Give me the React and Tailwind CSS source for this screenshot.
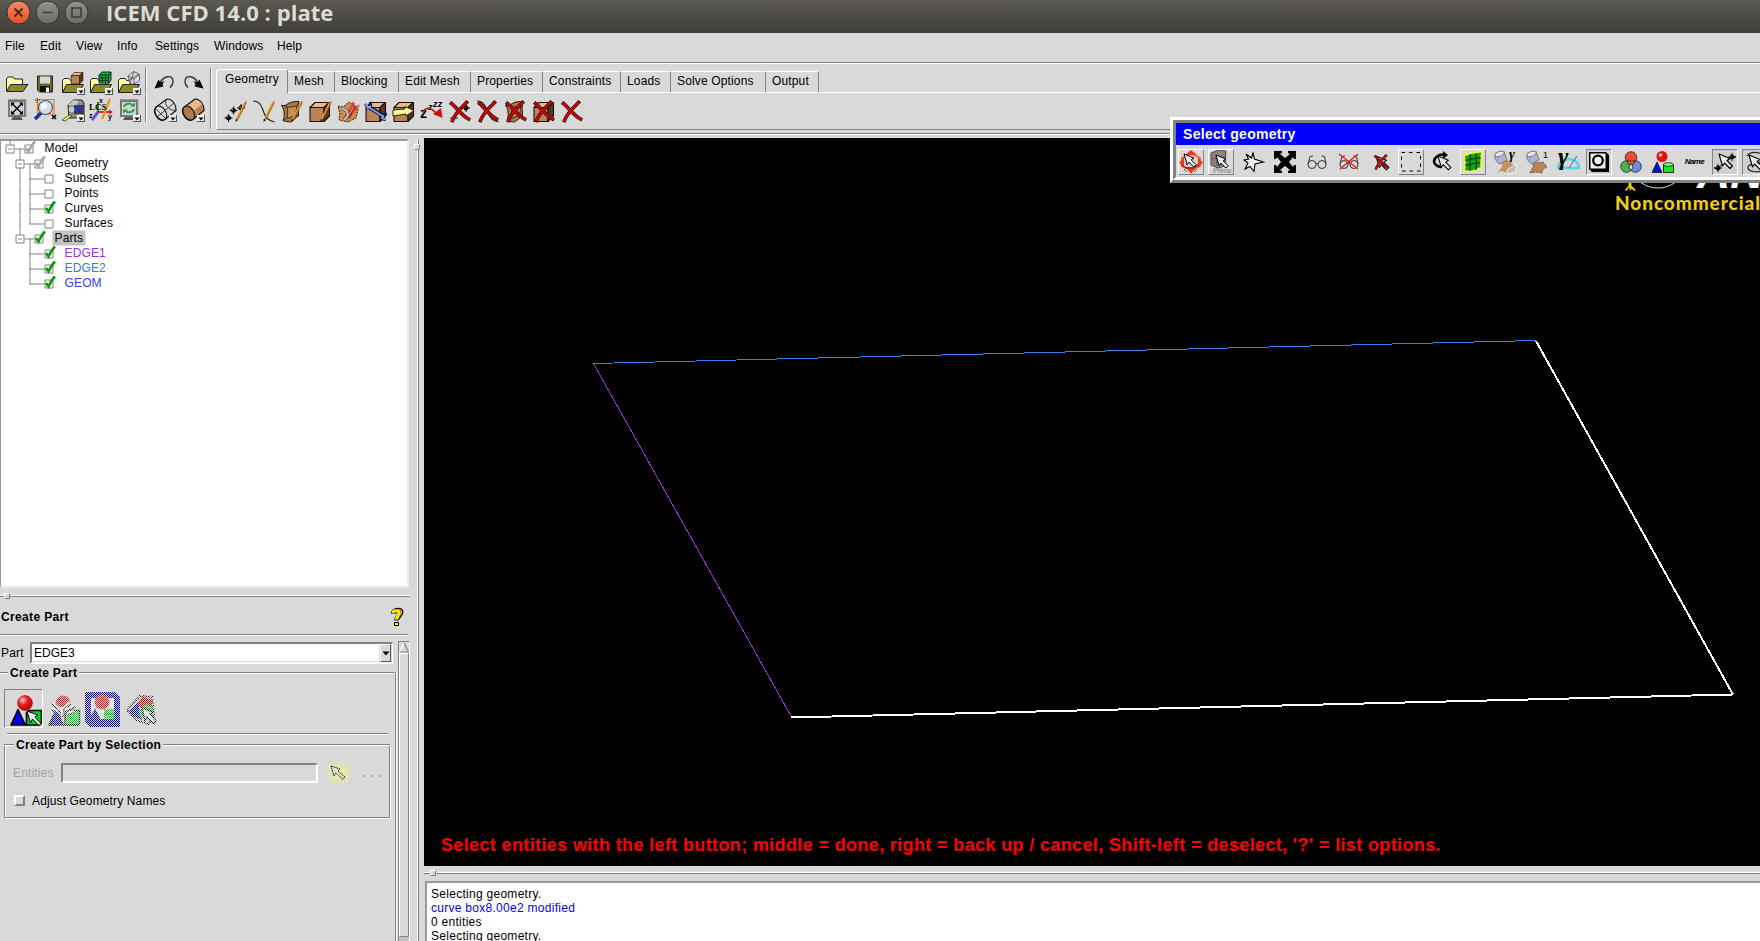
import React from "react";

const Svg = ({ children, w = 24, h = 24, vb, className = "" }) => (
  <svg width={w} height={h} viewBox={vb || `0 0 ${w} ${h}`} fill="none" className={`block shrink-0 ${className}`}>
    {children}
  </svg>
);

/* ---------- shared drawing parts ---------- */
const Drop = () => (
  <g>
    <path d="M16 17h8v7h-8z" fill="#e8e8e8" />
    <path d="M16 23.5h8M23.5 17v7" stroke="#555" />
    <path d="M16.5 23V17.500H23" stroke="#fff" />
    <path d="M17.500 19.500h5l-2.500 3z" fill="#000" />
  </g>
);
const Folder = () => (
  <g stroke="#222" strokeWidth="1">
    <path d="M1.5 21V9.500l1.500-2h5l1.500 2h7V21z" fill="#ffffa8" />
    <path d="M1.500 21.500l4-8H22.500l-4.500 8z" fill="#8c8a22" />
  </g>
);
const Pencil = () => (
  <g>
    <path d="M12.500 20L21 2.500" stroke="#e8951c" strokeWidth="2" />
    <path d="M13.600 20L22.400 2.500" stroke="#7a4b10" strokeWidth=".8" />
    <path d="M11.500 22l.3-3 2 1z" fill="#000" />
    <path d="M20.300 3.500l1.200-2.500 1.200.6-1.200 2.500z" fill="#e06060" />
  </g>
);
const Box = () => (
  <g stroke="#1a1008" strokeWidth="1.100" strokeLinejoin="round">
    <path d="M2 7.500h14v14H2z" fill="#b98553" />
    <path d="M2 7.500l5-5h14.500l-5.500 5z" fill="#e9b98b" />
    <path d="M16 7.500l5.500-5V16L16 21.500z" fill="#5a3a1e" />
  </g>
);
const Surf = () => (
  <g stroke="#2a1a0c" strokeLinejoin="round">
    <path d="M1.500 5c2 1.500 4 .5 6-1 3-2.500 8-2.500 11.500-2.500-1.500 5-.5 9-.5 14-3 3-5 4.500-8 6.500-2.500-.5-4 0-7.500-1.500 1.500-3 2-10-1.500-15.500z" fill="#a87545" />
    <path d="M7 7c3 1 6-1 10-1-1 4-1 7-1 10-3 0-6 2-9 2 1-4 1-8 0-11z" fill="#c4925f" strokeWidth=".8" />
    <path d="M7 7L4 5M17 6l2-3M16 16l3 0M7 18l-3 2" strokeWidth=".7" />
  </g>
);
const Cross = () => (
  <g strokeLinecap="square">
    <path d="M3.500 3.500C8 7 13 15 20.500 19M18.500 2.500C14 7 7 13 4.500 20.500" stroke="#111" strokeWidth="3.600" />
    <path d="M3.500 3.500C8 7 13 15 20.500 19M18.500 2.500C14 7 7 13 4.500 20.500" stroke="#c40808" strokeWidth="2.600" />
  </g>
);
const Dot = ({ x, y }) => (
  <g>
    <path d={`M${x - 4} ${y}h8M${x} ${y - 4}v8`} stroke="#000" />
    <circle cx={x} cy={y} r="2.400" fill="#000" />
    <circle cx={x - .8} cy={y - .8} r=".7" fill="#999" />
  </g>
);
const Cylinder = ({ solid }) => (
  <g stroke="#111" strokeWidth="1.100" strokeLinejoin="round">
    <path d="M2.500 9.500L14 1c5-.5 9.500 6 9 11.500L12 21.500C6 25-1 15 2.500 9.500z" fill={solid ? "#b98553" : "none"} />
    {solid && <path d="M6 8L14.500 1.800c3 .2 5 2 6.500 4.500L12.500 13C11 10 9 8.500 6 8z" fill="#e9b98b" stroke="none" />}
    <ellipse cx="7.800" cy="15" rx="5" ry="7.600" transform="rotate(-33 7.800 15)" fill={solid ? "#b07a48" : "none"} />
    {!solid && <path d="M14 1c-4 4 1 12 9 11.500M4 19L21 5M3 11l9 9" strokeWidth=".8" />}
  </g>
);
const Arrow = ({ x = 0, y = 0, s = 1 }) => (
  <path
    transform={`translate(${x} ${y}) scale(${s})`}
    d="M0 0l11 4.500-3 2 5.500 5.500-2.500 2.500L5.500 9 3.500 12z"
    fill="#ececec"
    stroke="#000"
    strokeWidth="1.100"
    strokeLinejoin="round"
  />
);
const Screen = () => (
  <g>
    <path d="M3 2h18v17H3z" fill="#777" />
    <path d="M5 4h14v13H5z" fill="#cfd4dc" />
    <path d="M2.500 1.500H21V19" stroke="#999" />
    <path d="M8 19h8l2 3H6z" fill="#555" />
  </g>
);

/* ---------- main toolbar icons ---------- */
const FileIcons = [
  <Svg key="o"><path d="M1.500 19.500V8l1.500-2h5l1.500 2h8v11z" fill="#ffffa8" stroke="#222" /><path d="M1.500 20.500l4-7H23L18 20.500z" fill="#8c8a22" stroke="#222" /></Svg>,
  <Svg key="s"><path d="M4.500 5h15v16h-13l-2-2z" fill="#6e6c1c" stroke="#222" /><path d="M7 5.500h10v7H7z" fill="#d8d8d8" /><path d="M7 15h10v6H7z" fill="#111" /><path d="M13 16.500h3V21h-3z" fill="#fff" /></Svg>,
  <Svg key="b"><Folder /><g transform="translate(9 0) scale(.6)"><Box /></g><Drop /></Svg>,
  <Svg key="m"><Folder /><g stroke="#032" strokeWidth="1"><path d="M10 4l3-3h9v8l-2 3H10z" fill="#1fae3a" /><path d="M13 4v8M16.500 4v8M10 7h10M10 9.500h10M19.500 4v8M10 4h10l2-3" /></g><Drop /></Svg>,
  <Svg key="w"><Folder /><g stroke="#555" strokeWidth=".9" fill="#e4e4e4"><path d="M11 5l6-4.500 5.500 3v6L17 13h-4z" /><path d="M11 5l6 3 5.500-4.500M17 8v5M17 .5L13 13M12 9l10-6" /></g><Drop /></Svg>,
];
const axis = { fontSize: 7, fontWeight: "bold", fontFamily: "Liberation Sans, sans-serif", fill: "#000" };
const ViewIcons = [
  <Svg key="f"><Screen /><path d="M7 5.500l10 10M17 5.500l-10 10" stroke="#000" strokeWidth="1.400" /><path d="M6 4.500h4l-4 4zM18 4.500v4l-4-4zM6 16.500v-4l4 4zM18 16.500h-4l4-4z" fill="#000" /></Svg>,
  <Svg key="z"><path d="M4.500 1.500h16.500v14.500H4.500z" stroke="#f07818" strokeWidth="1.200" /><path d="M4 0v5M2 2h5" stroke="#000" strokeWidth=".8" strokeDasharray="1 1" /><path d="M2 21l6-6" stroke="#1034a8" strokeWidth="3.500" /><circle cx="12.500" cy="9.500" r="7" fill="#d6dcf0" stroke="#555" strokeWidth="1.200" /><circle cx="11" cy="8" r="3" fill="#fff" opacity=".8" /><path d="M19 17l4 4M23 17l-4 4" stroke="#000" strokeWidth="1.600" /></Svg>,
  <Svg key="t"><path d="M7 7l5-5 9 0 2 3v12l-5 3H8z" fill="#8d8d8d" stroke="#222" /><path d="M7 7l5-5 6 1-3 5z" fill="#c8c8c8" /><path d="M13 7h10v9H13z" fill="#3c3c44" /><path d="M15 8h5.500v5H15z" fill="#2233c0" /><circle cx="10.500" cy="11.500" r="2.800" fill="#c8c8c8" /><path d="M1 22l7-5 3 1-7 5z" fill="#ffff33" stroke="#333" strokeWidth=".8" /><Drop /></Svg>,
  <Svg key="l"><path d="M9 14h13" stroke="#e01818" strokeWidth="1.800" /><path d="M9 14V4" stroke="#109030" strokeWidth="2" /><path d="M9 14l-6 8" stroke="#5a5ad0" strokeWidth="3" /><path d="M20 11.500l4 2.500-4 2.500z" fill="#e01818" /><path d="M13 21L21 1" stroke="#e8951c" strokeWidth="2.200" /><text x="0" y="12" fontSize="9" fontWeight="bold" fontFamily="Liberation Serif, serif" fill="#000">LCS</text><text x="10" y="5" {...axis}>x</text><text x="0" y="20" {...axis}>z</text><text x="19" y="21" {...axis}>y</text></Svg>,
  <Svg key="r"><Screen /><g stroke="#28a030" strokeWidth="1.900"><path d="M7 9c1-4 7-4 8-2" /><path d="M17 11c-1 4-7 4-8 2" /></g><path d="M13 8.500h5v-4zM11 11.500H6v4z" fill="#28a030" /><Drop /></Svg>,
];
const UndoIcons = [
  <Svg key="u"><path d="M7 12c3-7 13-9 13-2 0 3-1 5-3 6.500" stroke="#333" strokeWidth="1.300" /><path d="M1.500 17.500L5.500 8.500l2 3 4-1.500L9.500 13l1 2.500z" fill="#000" /></Svg>,
  <Svg key="r"><path d="M17 12c-3-7-13-9-13-2 0 3 1 5 3 6.500" stroke="#333" strokeWidth="1.300" /><path d="M22.500 17.500L18.500 8.500l-2 3-4-1.500 2 3-1 2.500z" fill="#000" /></Svg>,
];
const SolidIcons = [
  <Svg key="w"><Cylinder /><Drop /></Svg>,
  <Svg key="s"><Cylinder solid /><Drop /></Svg>,
];

const GeometryIcons = [
  <Svg key="0"><Dot x={4.500} y={18} /><Dot x={9.500} y={10.500} /><Dot x={17} y={8} /><Pencil /></Svg>,
  <Svg key="1"><path d="M1 1c5 0 8 3 9.500 8S15 21 22.500 22" stroke="#222" strokeWidth="1.100" /><Pencil /></Svg>,
  <Svg key="2"><Surf /><Pencil /></Svg>,
  <Svg key="3"><Box /><g transform="translate(1 0)"><Pencil /></g></Svg>,
  <Svg key="4"><path d="M2 6l5 1 6-5 5 3 4 4-2 9-8 4-9-2 1-6z" fill="#cf8a48" stroke="#3a2410" strokeDasharray="2 1" /><path d="M8 19L18 3M13 18l7-12" stroke="#c02020" strokeWidth="2" /><path d="M6 8l5 3 1 4-4 5" stroke="#555" strokeWidth="3.200" /><path d="M6 8l5 3 1 4-4 5" stroke="#c8d0d4" strokeWidth="1.800" /><path d="M14 10l3-8M17 13l6-8" stroke="#e05050" strokeWidth="1.800" /></Svg>,
  <Svg key="5"><Box /><path d="M3 6L21 17" stroke="#101840" strokeWidth="4" /><path d="M1 4l3 4 3-2-1-4M22 20l-4-1 0-4 5-1" stroke="#101840" strokeWidth="2.600" /><path d="M3 6L20 17M1.500 4l2.500 4 3-2M22 20l-4-2 1-3" stroke="#8b9df0" strokeWidth="1.700" /></Svg>,
  <Svg key="6"><Box /><path d="M1 10l12-1V6.500l9 4-8 5.500V14L1 16z" fill="#ffff90" stroke="#222" /></Svg>,
  <Svg key="7"><text x="0" y="18" fontSize="14" fontWeight="bold" fontFamily="Liberation Sans, sans-serif" fill="#000">z</text><text x="8" y="10" fontSize="9" fontStyle="italic" fontWeight="bold" fontFamily="Liberation Sans, sans-serif" fill="#000">z</text><text x="13" y="7" fontSize="9" fontStyle="italic" fontWeight="bold" fontFamily="Liberation Sans, sans-serif" fill="#000">zz</text><path d="M3 14c1-7 7-8 14 0" stroke="#b02020" strokeWidth="1.700" /><path d="M13 14l8-6 1.500 10z" fill="#d01010" /></Svg>,
  <Svg key="8"><Dot x={18} y={8} /><path d="M2 18h8" stroke="#222" /><Cross /></Svg>,
  <Svg key="9"><path d="M1 1c5 0 8 3 9.500 8S15 21 22.500 22" stroke="#222" strokeWidth="1.100" /><Cross /></Svg>,
  <Svg key="10"><Surf /><Cross /></Svg>,
  <Svg key="11"><Box /><Cross /></Svg>,
  <Svg key="12"><Cross /></Svg>,
];

/* ---------- selection toolbar icons ---------- */
const Glasses = () => (
  <g stroke="#333" strokeWidth="1">
    <circle cx="7" cy="14.500" r="4" /><circle cx="17" cy="14.500" r="4" />
    <path d="M11 14q1-1 2 0M3 14L5 6.500 8 6M21 14L19.500 6.500l-3-.5" />
  </g>
);
const Bucket = () => (
  <g>
    <path d="M2 4l9-3 3 9-7 4C3 12 1 8 2 4z" fill="#aab2dc" stroke="#666" strokeWidth=".8" />
    <ellipse cx="6.500" cy="4" rx="5" ry="2.500" transform="rotate(-18 6.500 4)" fill="#e2e4f0" stroke="#666" strokeWidth=".8" />
  </g>
);
const selectionItems = [
  ["up", <Svg key="a"><path d="M3 8l9-5 9 5v8l-9 4-9-4z" fill="#cfcfcf" stroke="#f07038" strokeWidth="2" /><path d="M12 0l6 5H6zM12 24l5-7H7zM0 13l5-6v10zM24 13l-5-6v10z" fill="#f03818" /><path d="M3 15c4 5 13 4 17-1" stroke="#b02818" strokeWidth="1.800" /><path d="M5 19l3 3M18 19l-3 3" stroke="#555" /><Arrow x={5} y={4} s={.9} /></Svg>],
  ["up", <Svg key="b"><path d="M2 3l8-3 7 1-1 15-7 2-7-3z" fill="#88837c" stroke="#4c4c48" /><path d="M7 5l1 11M2 9l14-2" stroke="#5a5a58" /><text x="4" y="23" fontSize="8" fontWeight="bold" fontFamily="Liberation Sans, sans-serif" fill="#9a9a9a" textLength="19">Prime</text><Arrow x={7} y={5} s={.9} /></Svg>],
  ["flat", <Svg key="c"><path d="M5 4l5.500 4L12 3l1.500 6 9 3-8.500 2-1 7.500-4-5-5 2.500 3-6-4-3 4.500-1z" fill="#eee" stroke="#000" strokeWidth="1.100" /></Svg>],
  ["flat", <Svg key="d"><path d="M1 1h22v22H1z" fill="#000" /><path d="M9 1h6v2l2 1-5 4-5-4 2-1zM9 23h6v-2l2-1-5-4-5 4 2 1zM1 9v6h2l1 2 4-5-4-5-1 2zM23 9v6h-2l-1 2-4-5 4-5 1 2z" fill="#d9d9d9" /></Svg>],
  ["flat", <Svg key="e"><Glasses /></Svg>],
  ["flat", <Svg key="f"><Glasses /><path d="M2 4l19 15M21 4L3 19" stroke="#e81818" strokeWidth="1.300" /></Svg>],
  ["flat", <Svg key="g"><Arrow x={7} y={6} s={.95} /><g transform="translate(4 4) scale(.7)"><Cross /></g></Svg>],
  ["up", <Svg key="h"><path d="M2.500 2.500h19v18.500h-19z" stroke="#000" strokeDasharray="3.500 4" /></Svg>],
  ["flat", <Svg key="i"><path d="M14 5C8 3 3 8 3 11.500c0 3 4 5.500 8 5.500" stroke="#000" strokeWidth="2.500" /><path d="M12 1l5 4-5 4z" fill="#000" /><Arrow x={7} y={6} s={.95} /></Svg>],
  ["up", <Svg key="j"><path d="M3 5c4 1 6-3 10-2 3 0 5-2 8-1-2 6 0 11-1 16-4 0-6 4-10 3-3 0-5 1-7 0 2-6 1-10 0-16z" fill="#10a810" stroke="#ffff20" strokeWidth="1.600" /><path d="M4 10c5 1 9-3 16-2M4 15c5 1 9-3 15-2M9 4c1 6 0 11 0 17M15 3c0 6 1 11 0 17" stroke="#063806" strokeWidth="1.200" /></Svg>],
  ["flat", <Svg key="k"><path d="M9 10l6 0 8 7-8 6-7-2-4 2 5-6z" fill="#c8935c" /><path d="M14 20l9-6v8l-8 2z" fill="#bcbcbc" stroke="#fff" strokeWidth=".8" /><Bucket /><text x="16" y="9" fontSize="14" fontStyle="italic" fontWeight="bold" fontFamily="Liberation Serif, serif" fill="#000">γ</text></Svg>],
  ["flat", <Svg key="l"><path d="M9 11l5 2 4-1 4 5-4 2-1 4-6-1-6 1 3-6z" fill="#b98553" stroke="#6a4828" strokeWidth=".8" strokeDasharray="3 1" /><Bucket /><text x="18" y="8" fontSize="9" fontFamily="Liberation Sans, sans-serif" fill="#000">1</text></Svg>],
  ["flat", <Svg key="m"><path d="M1 18c1-12 20-12 21 0z" stroke="#50d8dc" strokeWidth="2.600" /><path d="M12 18L20 6" stroke="#4858e8" /><text x="1" y="15" fontSize="25" fontWeight="bold" fontStyle="italic" fontFamily="Liberation Serif, serif" fill="#000">γ</text></Svg>],
  ["down", <Svg key="n"><path d="M2 2h17l3 3v17H5l-3-3z" fill="#000" /><path d="M3.500 3.500h15v15h-15z" fill="#eee" /><circle cx="11" cy="10.500" r="4.800" stroke="#000" strokeWidth="2.200" /></Svg>],
  ["flat", <Svg key="o"><g stroke="#222" strokeWidth=".8"><circle cx="7.500" cy="16.500" r="5.800" fill="#50b050" /><circle cx="16.500" cy="16.500" r="5.800" fill="#7888e8" /><circle cx="12" cy="7.500" r="5.800" fill="#f04838" /></g><path d="M8 11h8l-2 4h-4z" fill="#e07010" stroke="#222" strokeWidth=".8" /><path d="M12 13l-2 4 2 4 2-4z" fill="#e8e8e8" stroke="#222" strokeWidth=".8" /></Svg>],
  ["flat", <Svg key="p"><circle cx="11" cy="6.500" r="5.500" fill="#e01010" /><circle cx="9.500" cy="5" r="1.800" fill="#ffc0c0" /><path d="M6 12l5 10.500H1z" fill="#0010e8" stroke="#111" strokeWidth=".8" /><path d="M12.500 14.500h10v8h-10z" fill="#10e820" stroke="#111" strokeWidth=".9" /><ellipse cx="17.500" cy="14.500" rx="5" ry="1.800" fill="#80ff80" stroke="#111" strokeWidth=".8" /></Svg>],
  ["flat", <span key="q" className="text-[8px] italic font-bold tracking-[-0.6px]">Name</span>],
  ["down", <Svg key="r"><Dot x={5} y={18} /><Dot x={19} y={7} /><path d="M1 18h4L19 7h4" stroke="#000" /><Arrow x={6} y={4} /></Svg>],
  ["down", <Svg key="s"><path d="M4 6C8 0 22 2 20 9S6 12 5 17s10 6 15 3" stroke="#222" strokeWidth="1.200" /><Arrow x={6} y={5} /></Svg>],
];

const cellStyle = {
  up: "w-[26px] mx-[2px] border border-white border-r-[#828282] border-b-[#828282]",
  down: "w-[26px] mx-[2px] border border-[#828282] border-r-white border-b-white bg-[#d0d0d0]",
  flat: "w-[32px] pl-[1px]",
};

const SelectGeometry = () => (
  <div className="absolute left-[1170px] top-[117px] w-[610px] h-[66px] border-[3px] border-white border-b-[#828282] border-r-[#828282]">
    <div className="h-full border-[3px] border-[#828282] border-b-white bg-[#d9d9d9] flex flex-col">
      <div className="h-[22px] bg-[#0000ff] text-white font-bold text-[14px] leading-[22px] pl-[7px] tracking-[0.3px]">Select geometry</div>
      <div className="flex items-center h-[32px] shrink-0 pt-[1px]">
        {selectionItems.map(([kind, icon], i) => (
          <div key={i} className={`h-[26px] shrink-0 flex items-center justify-center ${cellStyle[kind]}`}>{icon}</div>
        ))}
      </div>
    </div>
  </div>
);

/* ---------- menu and toolbars ---------- */
const menu = [
  ["File", "w-[35px]"], ["Edit", "w-[36px]"], ["View", "w-[41px]"], ["Info", "w-[38px]"],
  ["Settings", "w-[59px]"], ["Windows", "w-[63px]"], ["Help", "w-[40px]"],
];
const tabs = [
  ["Mesh", "w-[47px]"], ["Blocking", "w-[64px]"], ["Edit Mesh", "w-[72px]"], ["Properties", "w-[72px]"],
  ["Constraints", "w-[78px]"], ["Loads", "w-[50px]"], ["Solve Options", "w-[95px]"], ["Output", "w-[53px]"],
];

const TitleBar = () => (
  <div className="h-[33px] shrink-0 bg-gradient-to-b from-[#5b5952] to-[#3f3e39] flex items-start overflow-hidden">
    <Svg w={92} h={28} className="ml-[4px]">
      <defs>
        <linearGradient id="close" x1="0" y1="0" x2="0" y2="1"><stop offset="0" stopColor="#f58a65" /><stop offset="1" stopColor="#e2501f" /></linearGradient>
        <linearGradient id="btn" x1="0" y1="0" x2="0" y2="1"><stop offset="0" stopColor="#93918a" /><stop offset="1" stopColor="#6d6b64" /></linearGradient>
      </defs>
      <circle cx="14.500" cy="12.500" r="11.500" fill="url(#close)" stroke="#33322e" />
      <circle cx="43.500" cy="12.500" r="11.500" fill="url(#btn)" stroke="#33322e" />
      <circle cx="72.500" cy="12.500" r="11.500" fill="url(#btn)" stroke="#33322e" />
      <path d="M10.500 8.500l8 8M18.500 8.500l-8 8" stroke="#50261a" strokeWidth="1.800" />
      <path d="M38.500 12.500h10M68 8h9v9h-9z" stroke="#3d3c38" strokeWidth="1.600" />
    </Svg>
    <span className="ml-[10px] font-['Open_Sans'] font-bold text-[22px] leading-[30px] -mt-[3px] tracking-[0.05px] text-[#dfdbd2] whitespace-nowrap">ICEM CFD 14.0 : plate</span>
  </div>
);

const Toolbars = () => (
  <div className="h-[71px] shrink-0 flex border-b border-white relative">
    <div className="flex w-full border-b border-[#828282]">
      <div className="pl-[5px] pt-[7px] w-[145px] flex flex-col gap-[3px]">
        <div className="flex gap-[4px]">{FileIcons}</div>
        <div className="flex gap-[4px]">{ViewIcons}</div>
      </div>
      <div className="w-[2px] mt-[3px] flex flex-col gap-[1px]">
        <div className="h-[27px] border-l border-[#828282] border-r border-r-white" />
        <div className="h-[27px] border-l border-[#828282] border-r border-r-white" />
      </div>
      <div className="pl-[6px] pt-[7px] w-[63px] flex flex-col gap-[3px]">
        <div className="flex gap-[4px]">{UndoIcons}</div>
        <div className="flex gap-[4px]">{SolidIcons}</div>
      </div>
      <div className="w-[2px] mt-[4px] h-[61px] border-l border-[#828282] border-r border-r-white" />
      <div className="ml-[4px] mt-[5px] flex-1 flex flex-col tracking-[0.15px]">
        <div className="flex h-[24px]">
          <div className="w-[72px] border-l border-t border-white border-r border-r-[#828282] rounded-t-[3px] pl-[8px] leading-[19px]">Geometry</div>
          <div className="flex flex-1 pt-[2px] border-b border-white">
            {tabs.map(([t, w]) => (
              <div key={t} className={`${w} shrink-0 border-t border-white border-r border-r-[#828282] rounded-tr-[3px] pl-[6px] leading-[19px] whitespace-nowrap`}>{t}</div>
            ))}
          </div>
        </div>
        <div className="h-[37px] border-l border-l-white border-b border-b-[#828282] flex gap-[4px] pl-[7px] pt-[7px]">{GeometryIcons}</div>
      </div>
    </div>
  </div>
);

/* ---------- model tree ---------- */
const Check = ({ x, state }) => (
  <g>
    <path d={`M${x + .5} 4.500h8v8h-8z`} stroke="#828282" fill="#fff" />
    {state && (
      <path d={`M${x + 1.500} 7.500l2.500 3.500C${x + 6} 7 ${x + 8} 3.500 ${x + 10.500} 1`} stroke={state === "on" ? "#0a9a0a" : "#a8a8a8"} strokeWidth="2.600" />
    )}
  </g>
);
const Expander = ({ x }) => (
  <g stroke="#828282">
    <path d={`M${x + .5} 4.500h8v8h-8z`} fill="#fff" />
    <path d={`M${x + 2.500} 8.500h4`} />
  </g>
);
const tree = [
  { t: "Model", d: 0, c: "part" },
  { t: "Geometry", d: 1, c: "part", more: true },
  { t: "Subsets", d: 2, outer: true },
  { t: "Points", d: 2, outer: true },
  { t: "Curves", d: 2, c: "on", outer: true },
  { t: "Surfaces", d: 2, outer: true, last: true },
  { t: "Parts", d: 1, c: "on", sel: true },
  { t: "EDGE1", d: 2, c: "on", color: "text-[#9b30d9]" },
  { t: "EDGE2", d: 2, c: "on", color: "text-[#3878e8]" },
  { t: "GEOM", d: 2, c: "on", color: "text-[#3040f8]", last: true },
];
const treePad = ["w-[41px]", "w-[51px]", "w-[61px]"];
const treeBox = [41, 51, 61];
const TreeRow = ({ n }) => (
  <div className="flex h-[15px] items-center">
    <svg height="15" viewBox={`0 0 ${treeBox[n.d]} 15`} fill="none" className={`shrink-0 ${treePad[n.d]}`}>
      <g stroke="#828282">
        {n.d === 0 && <path d="M8.500 0v4M13 8.500h10M18.500 8v7" />}
        {n.d === 1 && <path d={`M18.500 0v${n.more ? 15 : 5}M23 8.500h10M28.500 8v7`} />}
        {n.d === 2 && <path d={`M28.500 0v${n.last ? 9 : 15}M28 8.500h15`} />}
        {n.outer && <path d="M18.500 0v15" />}
      </g>
      {n.d < 2 && <Expander x={4 + n.d * 10} />}
      <Check x={23 + n.d * 10} state={n.c} />
    </svg>
    <span className={`h-[15px] leading-[15px] px-[2px] tracking-[0.15px] ${n.sel ? "bg-[#c3c3c3]" : ""} ${n.color || ""}`}>{n.t}</span>
  </div>
);

/* ---------- create part panel ---------- */
const Legend = ({ children, className = "" }) => (
  <div className={`flex items-center h-[14px] ${className}`}>
    <span className="font-bold px-[2px] tracking-[0.3px] leading-[14px] whitespace-nowrap">{children}</span>
    <div className="flex-1 h-[2px] border-t border-[#828282] border-b border-b-white" />
  </div>
);
const Shapes = () => (
  <g>
    <circle cx="15" cy="8" r="7.400" fill="url(#ball)" stroke="#900" strokeWidth=".6" />
    <path d="M8 14.500L15.500 30H1z" fill="#0000f0" stroke="#000" strokeWidth="1.600" strokeLinejoin="round" />
    <path d="M16.500 18l3-2.500H31.500V28l-2 2H16.500z" fill="#00d818" stroke="#000" strokeWidth="1.700" strokeLinejoin="round" />
  </g>
);
const PartIcons = () => (
  <div className="flex h-[39px] pl-[4px] items-start">
    <div className="w-[39px] h-[39px] border border-[#828282] border-r-white border-b-white flex items-end pl-[5px] pb-[1px] shrink-0">
      <Svg w={32} h={31}>
        <defs>
          <radialGradient id="ball" cx=".35" cy=".3" r=".8"><stop offset="0" stopColor="#ffd0d0" /><stop offset=".4" stopColor="#ee2020" /><stop offset="1" stopColor="#a00000" /></radialGradient>
          <pattern id="dither" width="2" height="2" patternUnits="userSpaceOnUse"><path d="M0 0h1v1H0zM1 1h1v1H1z" fill="#d9d9d9" /></pattern>
        </defs>
        <Shapes />
        <path d="M17 16l11 4-3 2 6 6.500-2 2-6.500-6.500-2 4z" fill="#e8e8e8" stroke="#000" />
      </Svg>
    </div>
    <Svg w={33} h={32} className="ml-[5px] mt-[6px]">
      <circle cx="15" cy="8" r="7.400" fill="#e01010" />
      <path d="M8 15L15.500 30H1z" fill="#0000c0" stroke="#000" strokeWidth="1.400" />
      <path d="M17 18l3-2.500H31.500V28l-2 2H17z" fill="#00e020" stroke="#000" strokeWidth="1.400" />
      <path d="M4 8l9 8 9-8M4 14l6 3M14 13v9M17 16l10-5M19 19l7-2" stroke="#222" strokeWidth="3.200" />
      <path d="M4 7l9 8 9-8M4 13l6 3M14 12v9M17 15l10-5M19 18l7-2" stroke="#fff" strokeWidth="2" />
      <path d="M0 0h33v32H0z" fill="url(#dither)" shapeRendering="crispEdges" />
    </Svg>
    <Svg w={36} h={36} className="ml-[4px] mt-[3px]">
      <path d="M0 0h30l5 5v30H5l-5-5z" fill="#0000b8" />
      <path d="M6 6h23v21H6z" fill="#f0f0f0" />
      <circle cx="17" cy="10" r="7.500" fill="#f01010" />
      <path d="M10 16l6 12H4z" fill="#000090" />
      <path d="M19 17h10v10H19z" fill="#00e818" />
      <path d="M19 22h10" stroke="#042" />
      <path d="M0 0h36v36H0z" fill="url(#dither)" shapeRendering="crispEdges" />
    </Svg>
    <Svg w={33} h={34} className="ml-[5px] mt-[4px]">
      <path d="M1 17L14 3l12 1 2 20-6 7-12-4z" stroke="#222" strokeWidth="2.200" strokeDasharray="2 1" />
      <path d="M11 10l6-7 9 4v6l-12 2z" fill="#e00000" />
      <path d="M3 18l9-9 4 18-10-4z" fill="#000098" />
      <path d="M13 17l7-6 7 3v9l-7 4-7-4z" fill="#00b818" />
      <path d="M16 15l11 4-3 2 6 7-2 3-7-7-2 4z" fill="#f4f4f4" stroke="#000" strokeWidth="1.400" />
      <path d="M0 0h33v34H0z" fill="url(#dither)" shapeRendering="crispEdges" />
    </Svg>
  </div>
);

const Groove = ({ className = "" }) => <div className={`h-[2px] border-t border-[#828282] border-b border-b-white ${className}`} />;
const Knob = ({ className }) => (
  <div className={`absolute w-[6px] h-[6px] bg-[#d9d9d9] border border-white border-r-[#828282] border-b-[#828282] ${className}`} />
);

const LeftPane = () => (
  <div className="w-[410px] shrink-0 flex flex-col">
    <div className="mt-[4px] h-[449px] w-[409px] shrink-0 bg-white border-t-2 border-l border-[#999] border-r-2 border-r-[#ebebeb] border-b-2 border-b-[#ebebeb]">
      <div className="-mt-[1px] translate-x-[0.5px] translate-y-[0.5px]">{tree.map((n) => <TreeRow key={n.t} n={n} />)}</div>
    </div>
    <div className="relative mt-[7px] h-[2px] shrink-0 border-t border-white border-b border-b-[#828282]"><Knob className="left-[4px] -top-[3px]" /></div>
    <div className="h-[37px] shrink-0 flex items-center justify-between pl-[1px] pr-[6px]">
      <span className="font-bold tracking-[0.35px] pt-[2px]">Create Part</span>
      <Svg w={14} h={20} className="mt-[2px]">
        <g strokeLinejoin="round">
          <path d="M4 6c0-3 6-3 6 0 0 2.500-3.500 3-3.500 7" transform="translate(1.200 -.8)" stroke="#000" strokeWidth="4.600" />
          <path d="M3 6.500c0-3.500 6.500-3.500 6.500 0C9.500 9 6.500 9.500 6.500 13.500" stroke="#000" strokeWidth="4.600" />
          <path d="M4 6c0-3 6-3 6 0 0 2.500-3.500 3-3.500 7" transform="translate(1.400 -.8)" stroke="#c89050" strokeWidth="2" />
          <path d="M3 6c0-3 6-3 6 0 0 2.500-2.800 3-2.800 6.800" stroke="#ffee00" strokeWidth="2.800" />
          <path d="M4.500 15.500h4v3h-4z" fill="#ffee00" stroke="#000" />
        </g>
      </Svg>
    </div>
    <Groove className="w-[408px] shrink-0" />
    <div className="flex flex-1 min-h-0">
      <div className="w-[398px] flex flex-col">
        <div className="flex mt-[6px] h-[22px] items-center">
          <span className="w-[30px] pl-[1px] tracking-[0.2px]">Part</span>
          <div className="w-[363px] h-[22px] border-2 border-[#828282] border-r-white border-b-white border-r-1 flex">
            <div className="flex-1 bg-white pl-[2px] leading-[18px] border-r border-b border-[#d9d9d9]">EDGE3</div>
            <div className="w-[11px] mr-[1px] h-[18px] border border-white border-r-[#555] border-b-[#555] bg-[#d9d9d9] flex items-center justify-center">
              <Svg w={8} h={5}><path d="M.5 .5h7L4 4.500z" fill="#000" /></Svg>
            </div>
          </div>
        </div>
        <div className="flex flex-1 min-h-0">
          <div className="w-[395px] flex flex-col">
            <div className="flex items-center mt-[2px]"><Groove className="w-[8px]" /><Legend className="flex-1">Create Part</Legend></div>
            <div className="mt-[9px]"><PartIcons /></div>
            <Groove className="ml-[7px] w-[381px] mt-[5px]" />
            <div className="ml-[4px] w-[386px] mt-[3px] flex flex-col">
              <div className="flex items-center"><Groove className="w-[10px] border-l" /><Legend className="flex-1">Create Part by Selection</Legend></div>
              <div className="-mt-[6px] h-[72px] border-l border-b border-r border-[#828282] shadow-[1px_1px_0_#fff,inset_1px_0_0_#fff] pt-[12px]">
                <div className="flex items-center h-[29px]">
                  <span className="w-[56px] shrink-0 pl-[8px] text-[#a3a3a3] tracking-[0.15px]">Entities</span>
                  <div className="w-[257px] shrink-0 h-[20px] border-2 border-[#828282] border-r-white border-b-white" />
                  <Svg w={22} h={22} className="ml-[10px]">
                    <path d="M2 2l18 18M20 2L2 20M11 1v20M1 11h20M6 1l10 20M16 1L6 21M1 6l20 10M1 16L21 6" stroke="#ffff50" strokeWidth=".9" />
                    <path d="M3 4l9 3-2 2 7 6-2 2.500-7-6.500-2 3z" fill="#ddd" stroke="#222" strokeDasharray="2 .8" />
                  </Svg>
                  <span className="ml-[12px] text-[#a3a3a3] font-bold tracking-[5px]">...</span>
                </div>
                <div className="flex items-center h-[27px] pl-[9px]">
                  <div className="w-[11px] h-[11px] border-2 border-white border-r-[#828282] border-b-[#828282]" />
                  <span className="ml-[7px] whitespace-nowrap tracking-[0.13px]">Adjust Geometry Names</span>
                </div>
              </div>
            </div>
          </div>
          <div className="w-[2px] mt-[9px] border-l border-[#828282] border-r border-r-white" />
        </div>
      </div>
      <div className="w-[12px] mt-[5px] border-l border-t border-[#828282] border-r border-r-white bg-[#c3c3c3] flex flex-col">
        <Svg w={10} h={11}><path d="M0 0h10v11H0z" fill="#d9d9d9" /><path d="M5 1L.8 10" stroke="#fff" strokeWidth="1.200" /><path d="M5 1l4.500 9H.8" stroke="#828282" strokeWidth="1.100" /></Svg>
        <div className="h-[284px] bg-[#d9d9d9] border border-white border-r-[#828282] border-b-[#828282]" />
      </div>
    </div>
  </div>
);

/* ---------- viewport ---------- */
const Viewport = () => (
  <div className="mt-[3px] h-[728px] shrink-0 bg-black relative overflow-hidden">
    <svg width="1336" height="728" viewBox="424 138 1336 728" fill="none" className="block">
      <g shapeRendering="crispEdges">
        <path d="M593.500 363.500L1536 340.500" stroke="#3880f0" />
        <path d="M593.500 363.500L791.500 717" stroke="#9b30d9" />
        <path d="M791 717.500L1733 694.500" stroke="#fff" strokeWidth="2" />
        <path d="M1536 341L1733 694.500" stroke="#fff" strokeWidth="2" />
      </g>
      <path d="M1629.500 178v8l-4 4.500M1630.500 186l4.500 4.500M1630.500 178v12" stroke="#f0cc10" strokeWidth="1.800" />
      <ellipse cx="1658" cy="171" rx="23" ry="17" stroke="#d8d8d8" />
      <text x="1697" y="187.500" fontSize="46" fontWeight="bold" fontStyle="italic" fontFamily="Liberation Sans, sans-serif" fill="#fff">AN</text>
      <text x="1615" y="209.500" fontSize="19" fontWeight="900" fontFamily="Lato, sans-serif" fill="#f0cc10" textLength="145">Noncommercial</text>
    </svg>
    <div className="absolute left-[17px] top-[696px] leading-[22px] text-[18px] font-bold text-[#ff0000] whitespace-nowrap tracking-[0.365px]">
      Select entities with the left button; middle = done, right = back up / cancel, Shift-left = deselect, '?' = list options.
    </div>
  </div>
);

export default function App() {
  return (
    <div className="relative w-[1760px] h-[941px] overflow-hidden bg-[#d9d9d9] text-black font-['Liberation_Sans',Arial,sans-serif] text-[12px] leading-[14px] flex flex-col">
      <TitleBar />
      <div className="h-[31px] shrink-0 border-b border-white">
        <div className="h-[30px] border-b border-[#828282] flex items-center pl-[5px] pb-[4px] tracking-[0.1px]">
          {menu.map(([t, w]) => <span key={t} className={w}>{t}</span>)}
        </div>
      </div>
      <Toolbars />
      <div className="flex flex-1 min-h-0">
        <LeftPane />
        <div className="w-[14px] shrink-0 pl-[7px] pt-[4px] relative">
          <div className="w-[2px] h-full border-l border-white border-r border-r-[#828282]" />
          <Knob className="left-[4px] top-[9px]" />
        </div>
        <div className="flex-1 min-w-0 flex flex-col">
          <Viewport />
          <div className="relative mt-[6px] h-[2px] shrink-0 border-t border-white border-b border-b-[#828282]"><Knob className="left-[6px] -top-[3px]" /></div>
          <div className="ml-[1px] mt-[7px] flex-1 min-h-0 overflow-hidden bg-white border-t-2 border-l-2 border-[#999] pl-[4px] pt-[4px] tracking-[0.28px]">
            <div className="h-[14px]">Selecting geometry.</div>
            <div className="h-[14px] text-[#0000ff]">curve box8.00e2 modified</div>
            <div className="h-[14px]">0 entities</div>
            <div className="h-[14px]">Selecting geometry.</div>
          </div>
        </div>
      </div>
      <SelectGeometry />
    </div>
  );
}
